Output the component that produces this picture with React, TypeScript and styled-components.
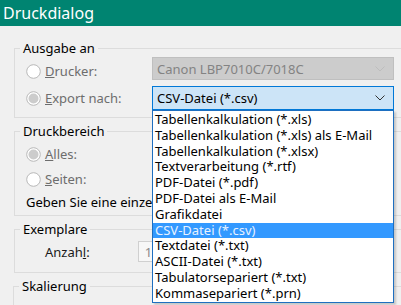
import styled, { createGlobalStyle } from 'styled-components'

const GlobalStyle = createGlobalStyle`
  html, body {
    margin: 0;
    padding: 0;
    background: #f0f0f0;
  }
  body {
    font-family: "Noto Sans", "Liberation Sans", sans-serif;
    font-size: 12px;
    color: #000;
  }
`

const Window = styled.div`
  position: relative;
  width: 401px;
  height: 305px;
  overflow: hidden;
  background: #f0f0f0;
`

const TitleBar = styled.div`
  height: 26px;
  background: #008471;
  color: #fff;
  font-size: 16px;
  display: flex;
  align-items: center;
  padding-left: 3px;
`

const Body = styled.div`
  width: 440px;
  padding: 14px 0 0 14px;
  display: flex;
  flex-direction: column;
  gap: 5px;
`

const Group = styled.fieldset<{ $shift?: number }>`
  margin: 0 0 0 ${(p) => p.$shift ?? 0}px;
  padding: 0;
  min-width: 0;
  border: 1px solid #dcdcdc;
`

const Legend = styled.legend`
  margin-left: 5px;
  padding: 0 3px;
  font-size: 13px;
  line-height: 16px;
`

const Inner = styled.div<{ $top: number; $bottom: number; $left?: number }>`
  padding: ${(p) => p.$top}px 0 ${(p) => p.$bottom}px ${(p) => p.$left ?? 11}px;
`

const OutputGrid = styled.div`
  display: grid;
  grid-template-columns: 126px 242px;
  grid-template-rows: 23px 24px;
  row-gap: 6px;
`

const RadioLabel = styled.div<{ $shift?: number; $muted?: boolean }>`
  display: flex;
  align-items: center;
  gap: 4px;
  height: 20px;
  margin-top: ${(p) => p.$shift ?? 0}px;
  color: ${(p) => (p.$muted ? '#6d6d6d' : '#000')};
  font-size: 13px;
`

const Stack = styled.div`
  display: flex;
  flex-direction: column;
  gap: 5px;
`

const Hint = styled.div`
  height: 16px;
  line-height: 16px;
  font-size: 13px;
  white-space: nowrap;
`

const Select = styled.div<{ $disabled?: boolean }>`
  display: flex;
  align-items: center;
  justify-content: space-between;
  padding: 0 8px 0 4px;
  font-size: 13px;
  border: 1px solid ${(p) => (p.$disabled ? '#bfbfbf' : '#0078d7')};
  background: ${(p) => (p.$disabled ? '#cccccc' : '#cce4f7')};
  color: ${(p) => (p.$disabled ? '#838383' : '#000')};
`

const CountRow = styled.div`
  display: flex;
  align-items: center;
  height: 21px;
  padding-left: 19px;
  font-size: 13px;
  color: #1a1a1a;
`

const SpinBox = styled.div`
  margin-left: 48px;
  width: 60px;
  height: 21px;
  box-sizing: border-box;
  border: 1px solid #d0d0d0;
  background: #f7f7f7;
  color: #888;
  padding-left: 6px;
  display: flex;
  align-items: center;
`

const DropList = styled.ul`
  position: absolute;
  left: 152px;
  top: 110px;
  width: 242px;
  box-sizing: border-box;
  margin: 0;
  padding: 1px 0 0;
  list-style: none;
  background: #fff;
  border: 1px solid #1e6fc0;
  box-shadow: 2px 2px 2px rgba(0, 0, 0, 0.18);
`

const DropItem = styled.li<{ $active?: boolean }>`
  height: 15.8px;
  line-height: 15.8px;
  padding-left: 2px;
  font-size: 13px;
  white-space: nowrap;
  background: ${(p) => (p.$active ? '#3399ff' : 'transparent')};
  color: ${(p) => (p.$active ? '#e8f2ff' : '#000')};
`

function Radio({ checked }: { checked?: boolean }) {
  return (
    <svg width="15" height="15" viewBox="0 0 15 15">
      <circle cx="7.5" cy="7.5" r="6.8" fill="#fff" stroke="#b8b8b8" />
      {checked && <circle cx="7.5" cy="7.5" r="5" fill="#cccccc" />}
    </svg>
  )
}

function Chevron({ color }: { color: string }) {
  return (
    <svg width="10" height="6" viewBox="0 0 10 6">
      <polyline points="0.5,0.5 5,5 9.5,0.5" fill="none" stroke={color} strokeWidth="1" />
    </svg>
  )
}

const formats = [
  'Tabellenkalkulation (*.xls)',
  'Tabellenkalkulation (*.xls) als E-Mail',
  'Tabellenkalkulation (*.xlsx)',
  'Textverarbeitung (*.rtf)',
  'PDF-Datei (*.pdf)',
  'PDF-Datei als E-Mail',
  'Grafikdatei',
  'CSV-Datei (*.csv)',
  'Textdatei (*.txt)',
  'ASCII-Datei (*.txt)',
  'Tabulatorsepariert (*.txt)',
  'Kommasepariert (*.prn)',
]

export default function App() {
  return (
    <Window>
      <GlobalStyle />
      <TitleBar>Druckdialog</TitleBar>
      <Body>
        <Group>
          <Legend>Ausgabe an</Legend>
          <Inner $top={1} $bottom={7}>
            <OutputGrid>
              <RadioLabel $muted $shift={4}>
                <Radio />
                <span>
                  <u>D</u>rucker:
                </span>
              </RadioLabel>
              <Select $disabled>
                Canon LBP7010C/7018C
                <Chevron color="#bdbdbd" />
              </Select>
              <RadioLabel $muted $shift={2}>
                <Radio checked />
                <span>
                  <u>E</u>xport nach:
                </span>
              </RadioLabel>
              <Select>
                CSV-Datei (*.csv)
                <Chevron color="#333" />
              </Select>
            </OutputGrid>
          </Inner>
        </Group>

        <Group>
          <Legend>Druckbereich</Legend>
          <Inner $top={5} $bottom={5}>
            <Stack>
              <RadioLabel $muted>
                <Radio checked />
                <span>
                  <u>A</u>lles:
                </span>
              </RadioLabel>
              <RadioLabel $muted>
                <Radio />
                <span>
                  <u>S</u>eiten:
                </span>
              </RadioLabel>
              <Hint>Geben Sie eine einzelne Seite oder einen Bereich an</Hint>
            </Stack>
          </Inner>
        </Group>

        <Group>
          <Legend>Exemplare</Legend>
          <Inner $top={4} $bottom={10}>
            <CountRow>
              <span>
                Anzah<u>l</u>:
              </span>
              <SpinBox>1</SpinBox>
            </CountRow>
          </Inner>
        </Group>

        <Group $shift={-1}>
          <Legend>Skalierung</Legend>
          <Inner $top={8} $bottom={10} $left={16}>
            <RadioLabel $muted>
              <Radio />
            </RadioLabel>
          </Inner>
        </Group>
      </Body>

      <DropList>
        {formats.map((f) => (
          <DropItem key={f} $active={f === 'CSV-Datei (*.csv)'}>
            {f}
          </DropItem>
        ))}
      </DropList>
    </Window>
  )
}
